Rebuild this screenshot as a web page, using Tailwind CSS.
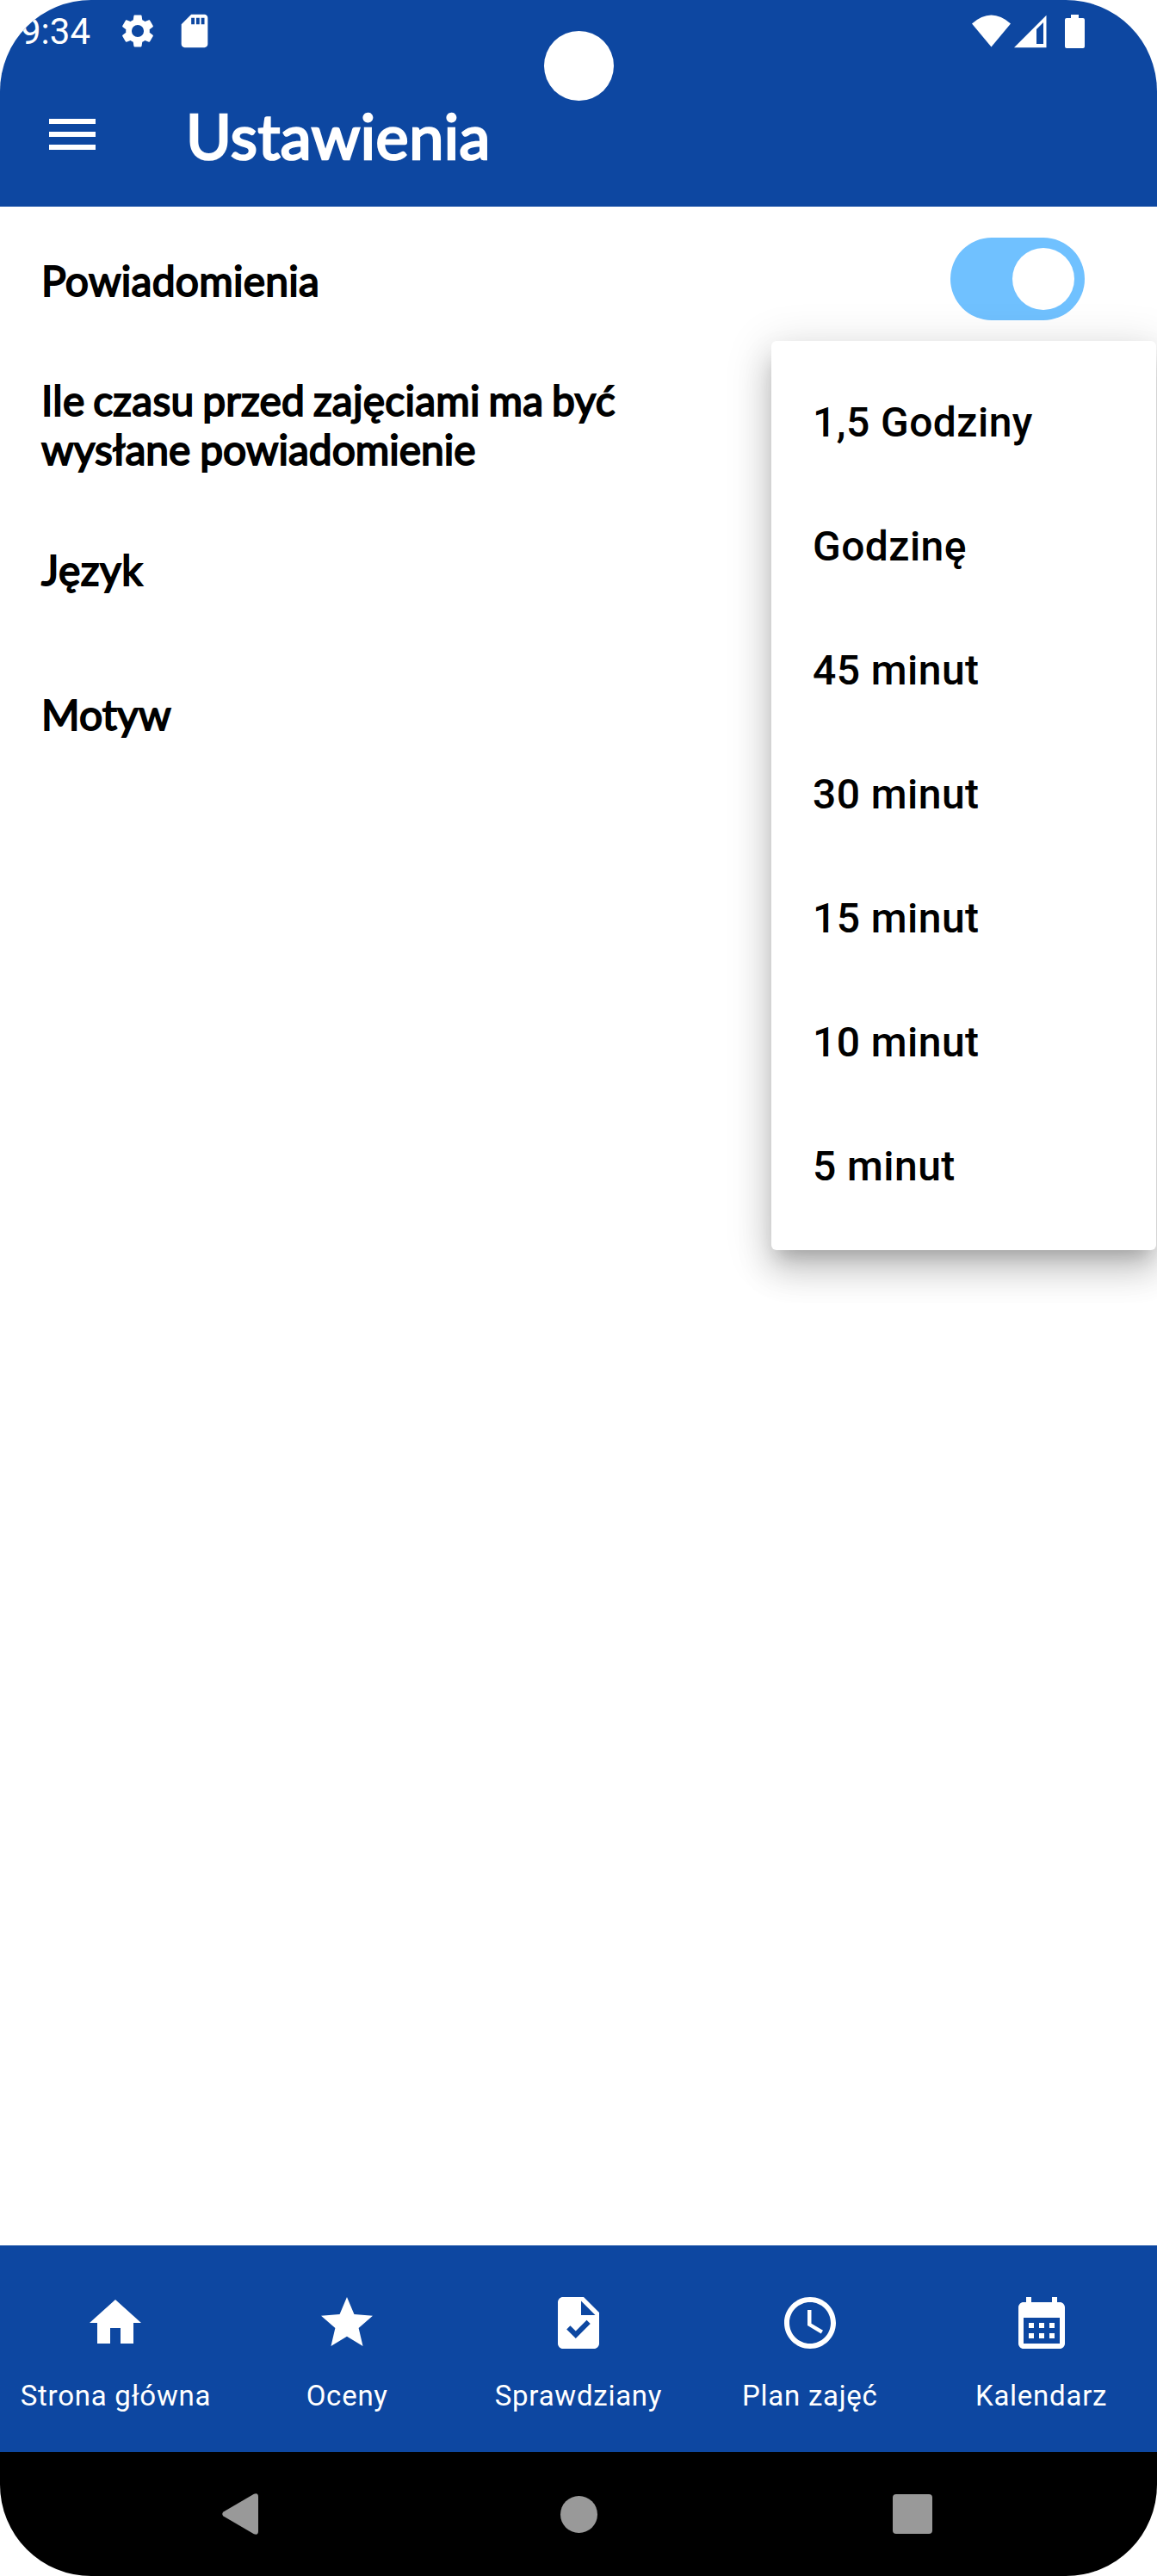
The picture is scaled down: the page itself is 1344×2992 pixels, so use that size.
<!DOCTYPE html>
<html lang="pl">
<head>
<meta charset="utf-8">
<title>Ustawienia</title>
<script src="https://cdn.jsdelivr.net/npm/@tailwindcss/browser@4"></script>
</head>
<body class="bg-white">
<div class="relative flex h-[2992px] w-[1344px] flex-col overflow-hidden rounded-[106px] bg-white font-['Roboto',sans-serif] text-black">
  <header class="h-[240px] bg-[#0d47a1] text-white">
    <div class="flex h-[72px] items-center pr-[84px] pl-6">
      <span class="pt-[2px] text-[42px] leading-[70px]">9:34</span>
      <svg class="ml-8 h-[46px] w-[46px]" viewBox="0 0 24 24" fill="currentColor"><path d="M19.14 12.94c.04-.3.06-.61.06-.94 0-.32-.02-.64-.07-.94l2.03-1.58c.18-.14.23-.41.12-.61l-1.92-3.32c-.12-.22-.37-.29-.59-.22l-2.39.96c-.5-.38-1.03-.7-1.62-.94l-.36-2.54c-.04-.24-.24-.41-.48-.41h-3.84c-.24 0-.43.17-.47.41l-.36 2.54c-.59.24-1.13.57-1.62.94l-2.39-.96c-.22-.08-.47 0-.59.22L2.74 8.87c-.12.21-.08.47.12.61l2.03 1.58c-.05.3-.09.63-.09.94s.02.64.07.94l-2.03 1.58c-.18.14-.23.41-.12.61l1.92 3.32c.12.22.37.29.59.22l2.39-.96c.5.38 1.03.7 1.62.94l.36 2.54c.05.24.24.41.48.41h3.84c.24 0 .44-.17.47-.41l.36-2.54c.59-.24 1.13-.56 1.62-.94l2.39.96c.22.08.47 0 .59-.22l1.92-3.32c.12-.22.07-.47-.12-.61l-2.01-1.58zM12 15.700A3.700 3.700 0 1 1 12 8.300a3.700 3.700 0 0 1 0 7.400z"/></svg>
      <svg class="ml-5 h-[46px] w-[46px]" viewBox="0 0 24 24" fill="currentColor"><path d="M18 2h-8L4.020 8 4 20c0 1.100.9 2 2 2h12c1.100 0 2-.9 2-2V4c0-1.100-.9-2-2-2zm-6 6h-2V4h2v4zm3 0h-2V4h2v4zm3 0h-2V4h2v4z"/></svg>
      <svg class="ml-auto h-[39px] w-[131px]" viewBox="0 0 131 39" fill="currentColor"><path d="M0 10.500Q22.500-9.500 45 10.500L22.500 37.500z"/><path fill-rule="evenodd" d="M49 38.200L86.500 .7V38.200zM75 17V34H83V9z"/><path d="M110 4h5V0h9v4h5q2 0 2 2v31q0 2-2 2h-19q-2 0-2-2V6q0-2 2-2z"/></svg>
    </div>
    <div class="flex h-[168px] items-center pl-12">
      <svg class="h-[72px] w-[72px]" viewBox="0 0 24 24" fill="currentColor"><path d="M3 18h18v-2H3v2zm0-5h18v-2H3v2zm0-7v2h18V6H3z"/></svg>
      <h1 class="ml-24 pt-[2px] font-['Lato',sans-serif] text-[72px] leading-[86px] tracking-[0.5px] [-webkit-text-stroke:2.7px_currentColor]">Ustawienia</h1>
    </div>
  </header>

  <main class="flex-1 px-12 font-['Lato',sans-serif] text-[48px] leading-[57px] tracking-[0.24px] [-webkit-text-stroke:1.9px_currentColor]">
    <div class="flex h-[168px] items-center justify-between pr-9">
      <span class="pt-[2px]">Powiadomienia</span>
      <div class="flex h-24 w-[156px] items-center justify-end rounded-full bg-[#70c1ff] pr-3"><div class="h-[72px] w-[72px] rounded-full bg-white"></div></div>
    </div>
    <div class="flex h-[168px] items-center pt-[2px]">
      <p class="whitespace-nowrap [word-spacing:-2.8px]">Ile czasu przed zajęciami ma być<br><span class="tracking-[-0.03px] [word-spacing:-1.5px]">wysłane powiadomienie</span></p>
    </div>
    <div class="flex h-[168px] items-center pt-[2px] tracking-[0.5px]">Język</div>
    <div class="flex h-[168px] items-center pt-[2px] tracking-[0.1px]">Motyw</div>
  </main>

  <!-- Dropdown menu -->
  <ul class="absolute top-[396px] left-[896px] w-[447px] rounded-[6px] bg-white pt-[23px] pb-[25px] pl-12 text-[48px] leading-[144px] font-medium tracking-[0.45px] shadow-[0_15px_20px_-9px_rgb(0_0_0/0.2),0_24px_38px_3px_rgb(0_0_0/0.14),0_9px_52px_6px_rgb(0_0_0/0.12)]">
    <li>1,5 Godziny</li>
    <li>Godzinę</li>
    <li>45 minut</li>
    <li>30 minut</li>
    <li>15 minut</li>
    <li>10 minut</li>
    <li>5 minut</li>
  </ul>

  <nav class="grid h-[240px] grid-cols-5 bg-[#0d47a1] pt-[54px] text-[33px] leading-[40px] tracking-[0.75px] whitespace-nowrap text-white">
    <div class="flex flex-col items-center gap-[29px]">
      <svg class="h-[72px] w-[72px]" viewBox="0 0 24 24" fill="currentColor"><path d="M10 20v-6h4v6h5v-8h3L12 3 2 12h3v8z"/></svg>
      <span>Strona główna</span>
    </div>
    <div class="flex flex-col items-center gap-[29px]">
      <svg class="h-[72px] w-[72px]" viewBox="0 0 24 24" fill="currentColor"><path d="M12 17.270L18.180 21l-1.640-7.030L22 9.240l-7.190-.61L12 2 9.190 8.630 2 9.240l5.460 4.730L5.820 21z"/></svg>
      <span>Oceny</span>
    </div>
    <div class="flex flex-col items-center gap-[29px]">
      <svg class="h-[72px] w-[72px]" viewBox="0 0 24 24" fill="currentColor"><path d="M14 2H6c-1.100 0-1.990.9-1.990 2L4 20c0 1.100.89 2 1.990 2H18c1.100 0 2-.9 2-2V8l-6-6zm-3.060 16L7.400 14.460l1.410-1.410 2.120 2.120 4.240-4.240 1.410 1.410L10.940 18zM13 9V3.500L18.500 9H13z"/></svg>
      <span>Sprawdziany</span>
    </div>
    <div class="flex flex-col items-center gap-[29px]">
      <svg class="h-[72px] w-[72px]" viewBox="0 0 24 24" fill="currentColor"><path d="M11.990 2C6.470 2 2 6.480 2 12s4.470 10 9.990 10C17.520 22 22 17.520 22 12S17.520 2 11.990 2zM12 20c-4.420 0-8-3.580-8-8s3.580-8 8-8 8 3.580 8 8-3.580 8-8 8zm.5-13H11v6l5.250 3.150.75-1.230-4.500-2.670V7z"/></svg>
      <span>Plan zajęć</span>
    </div>
    <div class="flex flex-col items-center gap-[29px]">
      <svg class="h-[72px] w-[72px]" viewBox="0 0 24 24" fill="currentColor"><path d="M19 4h-1V2h-2v2H8V2H6v2H5c-1.110 0-1.990.9-1.990 2L3 20c0 1.100.89 2 2 2h14c1.100 0 2-.9 2-2V6c0-1.100-.9-2-2-2zm0 16H5V10h14v10zM9 14H7v-2h2v2zm4 0h-2v-2h2v2zm4 0h-2v-2h2v2zm-8 4H7v-2h2v2zm4 0h-2v-2h2v2zm4 0h-2v-2h2v2z"/></svg>
      <span>Kalendarz</span>
    </div>
  </nav>

  <div class="flex h-[144px] items-center justify-between bg-black pr-[261px] pl-[258px] text-[#999999]">
    <svg class="h-12 w-[42px]" viewBox="0 0 42 48" fill="currentColor"><path d="M1.500 21.500L37 .8Q42-1 42 4V44Q42 49 37 47.200L1.500 26.500Q-1 24 1.500 21.500z"/></svg>
    <div class="ml-[7px] h-[43px] w-[43px] rounded-full bg-[#999999]"></div>
    <div class="h-[46px] w-[46px] rounded-[4px] bg-[#999999]"></div>
  </div>

  <!-- Camera cutout -->
  <div class="absolute top-[36px] left-[632px] h-[81px] w-[81px] rounded-full bg-white"></div>
</div>
</body>
</html>
